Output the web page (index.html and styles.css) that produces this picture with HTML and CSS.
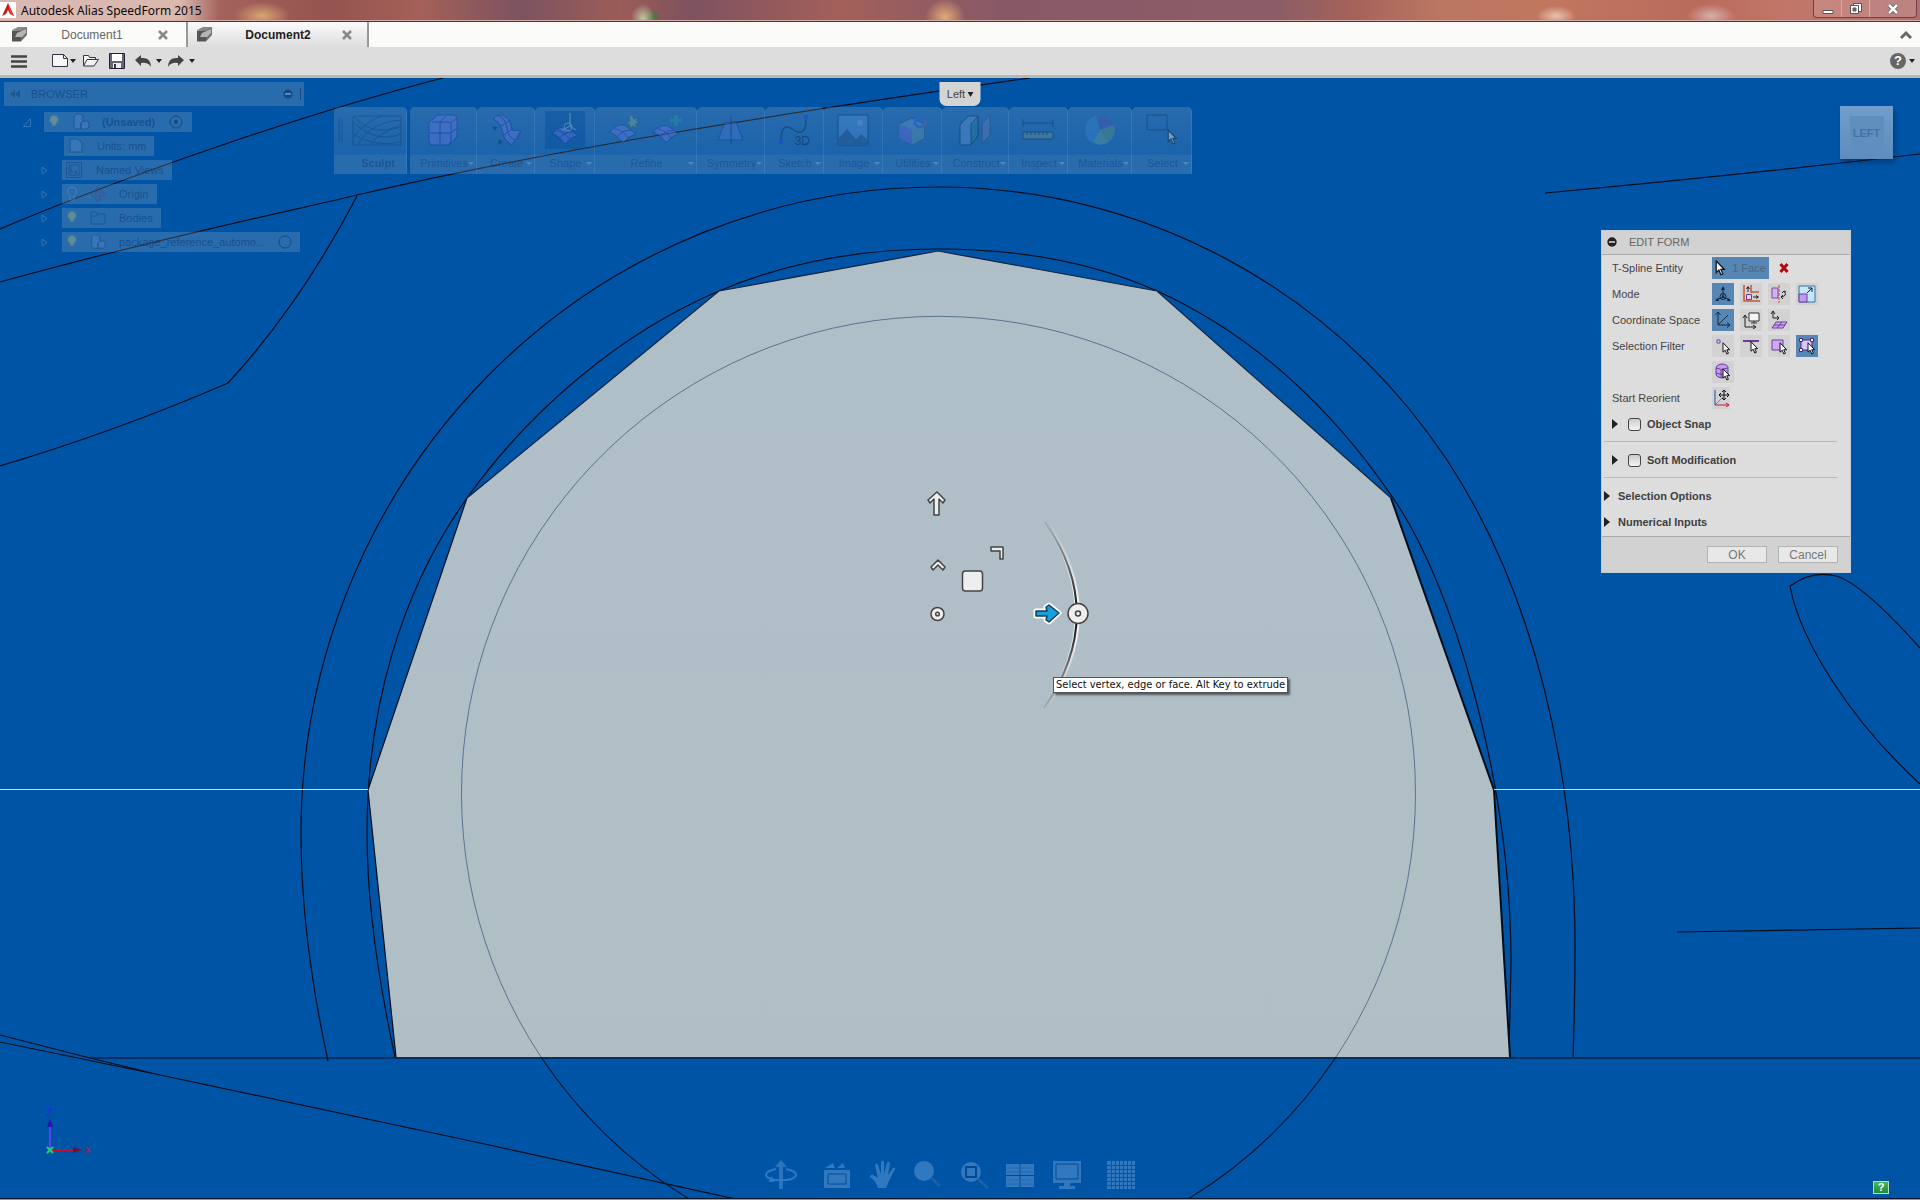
FILE: index.html
```
<!DOCTYPE html>
<html lang="en">
<head>
<meta charset="utf-8">
<title>Autodesk Alias SpeedForm 2015</title>
<link rel="stylesheet" href="styles.css">
</head>
<body>
<svg class="defs" aria-hidden="true">
  <defs>
    <symbol id="cursor" viewBox="0 0 9 13"><path d="M1 .8v9.4l2.2-2 1.6 3.8 1.6-.7-1.6-3.6h2.9z" fill="#fff" stroke="#111" stroke-width="1"/></symbol>
    <symbol id="doc" viewBox="0 0 17 17"><path d="M1 4l6-3h9l-5 4z" fill="#888"/><path d="M1 4.500h9v11H1z" fill="#555"/><path d="M10 4.500L16 1v8l-6 6.500z" fill="#707070"/><path d="M4 11l2-4 9-4v4l-4 4z" fill="#b5b5b5"/></symbol>
    <symbol id="bulb" viewBox="0 0 12 16"><path d="M6 1a4.500 4.500 0 0 0-2 8.500V12h4V9.500A4.500 4.500 0 0 0 6 1z" fill="#b4c080" stroke="#4c7890"/><path d="M4 13h4v2H4z" fill="#35607f"/></symbol>
    <symbol id="part" viewBox="0 0 18 18"><path d="M2 3l2-2h5l2 2v5l-2 2v6H4l-2-2zM9 10l2-2h4l2 2v4l-2 2H9z" fill="#4c87cb" stroke="#0d3468"/></symbol>
    <symbol id="patch" viewBox="0 0 32 26"><path d="M1 11Q12-1 20 5q5 3 10 8-8 2-14 10Q9 13 1 11z" fill="#6d7cf0" stroke="#10307a"/><path d="M7 7q10 3 16 12M9 17Q15 8 25 9" fill="none" stroke="#2030a0"/></symbol>
    <linearGradient id="fade" x1="0" y1="0" x2="0" y2="1"><stop offset="0" stop-color="#111" stop-opacity=".1"/><stop offset=".45" stop-color="#111"/><stop offset=".55" stop-color="#111"/><stop offset="1" stop-color="#111" stop-opacity=".1"/></linearGradient>
    <linearGradient id="glow" x1="0" y1="0" x2="0" y2="1"><stop offset="0" stop-color="#fff" stop-opacity="0"/><stop offset=".5" stop-color="#fff"/><stop offset="1" stop-color="#fff" stop-opacity="0"/></linearGradient>
    <linearGradient id="facefill" x1="0" y1="0" x2="0" y2="1"><stop offset="0" stop-color="#afbfc8"/><stop offset="1" stop-color="#b1bec6"/></linearGradient>
  </defs>
</svg>

<header class="titlebar">
  <svg class="app-logo" width="16" height="16" viewBox="0 0 16 16"><path fill="#fff" d="M0 0h16v16H0z"/><path d="M8 1L2 14l4-2 2-4 2 4 4 2z" fill="#c81e14"/><path d="M8 1l6 13-4-3z" fill="#ef4030"/></svg>
  <h1 class="app-title">Autodesk Alias SpeedForm 2015</h1>
  <div class="window-buttons">
    <button aria-label="Minimize"><svg width="12" height="14" viewBox="0 0 12 14"><path d="M1 8.500h10v3H1z" fill="#fff" stroke="#555"/></svg></button>
    <button aria-label="Restore"><svg width="12" height="12" viewBox="0 0 12 12"><path d="M3.500.5h8v8h-8z" fill="#fff" stroke="#555"/><path d="M.5 2.500h8v8h-8z" fill="#fff" stroke="#555"/><path d="M3 5h3v3H3z" fill="#98646a" stroke="#555"/></svg></button>
    <button class="close" aria-label="Close"><svg width="12" height="12" viewBox="0 0 12 12"><path d="M2 2l8 8M10 2l-8 8" stroke="#555" stroke-width="4"/><path d="M2 2l8 8M10 2l-8 8" stroke="#fff" stroke-width="2.500"/></svg></button>
  </div>
</header>

<nav class="tabs">
  <div class="tab"><svg width="17" height="17"><use href="#doc"/></svg><a href="#doc1">Document1</a><button aria-label="Close Document1"><svg width="10" height="10" viewBox="0 0 10 10"><path d="M1 1l8 8M9 1L1 9" stroke="#888" stroke-width="2.500"/></svg></button></div>
  <div class="tab active"><svg width="17" height="17"><use href="#doc"/></svg><a href="#doc2">Document2</a><button aria-label="Close Document2"><svg width="10" height="10" viewBox="0 0 10 10"><path d="M1 1l8 8M9 1L1 9" stroke="#888" stroke-width="2.500"/></svg></button></div>
  <button class="collapse" aria-label="Collapse"><svg width="14" height="10" viewBox="0 0 14 10"><path d="M2 8l5-5 5 5" fill="none" stroke="#666" stroke-width="3"/></svg></button>
</nav>

<div class="toolbar">
  <button class="menu" aria-label="Menu"><svg width="18" height="15" viewBox="0 0 18 15"><path d="M1 2.500h16M1 7.500h16M1 12.500h16" stroke="#444" stroke-width="2.600"/></svg></button>
  <button aria-label="New"><svg width="26" height="16" viewBox="0 0 26 16"><path d="M1.500 1.500h11l4 4v8h-15z" fill="#f4f6f8" stroke="#334"/><path d="M12.500 1.500v4h4" fill="none" stroke="#334"/><path d="M19 6h6l-3 4z" fill="#222"/></svg></button>
  <button class="open" aria-label="Open"><svg width="18" height="16" viewBox="0 0 18 16"><path d="M1.500 12V2.500h5l1 2h6v2" fill="#f2f4f6" stroke="#334"/><path d="M1.500 13L5 6.500h11.500L12 13z" fill="#f2f4f6" stroke="#334"/></svg></button>
  <button class="save" aria-label="Save"><svg width="16" height="16" viewBox="0 0 16 16"><path d="M.5.5h15v15H.5z" fill="#667" stroke="#223"/><path d="M3 1h10v7H3z" fill="#fff"/><path d="M4 10h8v5H4z" fill="#eee"/><path d="M5 11h2v4H5z" fill="#334"/></svg></button>
  <button class="undo" aria-label="Undo"><svg width="28" height="16" viewBox="0 0 28 16"><path d="M0 7l6-5v3q10-1 10 9-3-5-10-4v3z" fill="#444"/><path d="M21 6h6l-3 4z" fill="#222"/></svg></button>
  <button aria-label="Redo"><svg width="28" height="16" viewBox="0 0 28 16"><path d="M16 7l-6-5v3Q0 4 0 14q3-5 10-4v3z" fill="#444"/><path d="M21 6h6l-3 4z" fill="#222"/></svg></button>
  <button class="help" aria-label="Help"><span class="help-disc">?</span><svg width="6" height="5" viewBox="0 0 6 5"><path d="M0 0h6L3 4z" fill="#222"/></svg></button>
</div>

<main class="viewport">
  <svg class="scene" viewBox="0 78 1920 1120" preserveAspectRatio="xMidYMid slice">
    <path d="M395 1057C374 960 367 890 367 833C367 710 400 592 467 498C530 410 620 333 719 291C790 261 865 249 938 249C1015 249 1090 261 1157 291C1250 333 1330 405 1393 498C1452 582 1511 780 1511 962L1509 1057" fill="none" stroke="#060c1a" stroke-width="1.200"/>
    <path d="M938 251L1157 291 1391 498 1494 790 1510 1057H396L368 790 467 498 719 291z" fill="url(#facefill)"/>
    <g fill="none" stroke="#060c1a" stroke-width="1.200">
      <path d="M467 498L719 291 938 251 1157 291 1391 498" stroke="#13213c"/>
      <path d="M467 498L368 790 396 1057"/>
      <path d="M1391 498L1494 790 1510 1057" stroke-width="2"/>
      <path d="M328 1061C306 960 301 890 301 833A637 646 0 0 1 938 187C1140 187 1330 285 1447 460C1536 595 1575 775 1575 945Q1575 1005 1573 1057"/>
      <path d="M90 1058H1920"/>
      <path d="M0 229C120 178 300 115 443 78"/>
      <path d="M0 282C170 235 300 209 357 195C550 150 770 115 1030 78"/>
      <path d="M357 196Q300 305 228 383Q120 430 0 466"/>
      <path d="M1545 193Q1740 175 1920 154"/>
      <path d="M1920 784C1850 720 1800 640 1790 586Q1812 570 1836 576Q1862 583 1920 648"/>
      <path d="M1677 932L1920 928"/>
      <path d="M0 1035L86 1057 160 1075M0 1042L160 1075 480 1143 740 1200"/>
    </g>
    <path d="M541 1057A477 477 0 1 1 1336 1057" fill="none" stroke="#5b7390"/>
    <path d="M541 1057A477 477 0 0 0 694 1202M1336 1057A477 477 0 0 1 1183 1202" fill="none" stroke="#061630" stroke-width="1.200"/>
    <path d="M0 789.500H368M1494 789.500H1920" stroke="#d3dbe6"/>

    <g fill="none"><path d="M1046 522Q1109 614 1045 708" stroke="url(#glow)" stroke-width="5"/><path d="M1045 522Q1109 614 1044 708" stroke="url(#fade)" stroke-width="2"/></g>
    <g fill="#eee" stroke="#444" stroke-width="1.500" stroke-linejoin="round">
      <path d="M937 492l8 8-2 3-4-4v16h-5v-16l-4 4-2-3z"/>
      <path d="M938 560l7 7-2 3-5-5-5 5-2-3z"/>
      <path d="M991 547h12v12h-3v-8h-9z"/>
      <rect x="962.500" y="571" width="20" height="20" rx="3"/>
      <circle cx="937.500" cy="614" r="6.500"/><circle cx="937.500" cy="614" r="1.800"/>
      <circle cx="1078" cy="613.500" r="10"/><circle cx="1078" cy="613.500" r="2.500"/>
    </g>
    <path d="M1036 611h11l-1-4 3-2 10 8-10 9-3-2 1-4h-11z" fill="#fff" stroke="#fff" stroke-width="5" stroke-linejoin="round"/>
    <path d="M1036 611h11l-1-4 3-2 10 8-10 9-3-2 1-4h-11z" fill="#18a0dc" stroke="#123f58" stroke-width="1.500" stroke-linejoin="round"/>
    <g class="axis"><path d="M50 1150v-31" stroke="#5540ff" stroke-width="2"/><path d="M50 1118l3 9h-6z" fill="#2018b0"/><path d="M51 1150h25" stroke="#c01030" stroke-width="2"/><path d="M82 1150l-9-3v6z" fill="#701030"/><path d="M47 1147l6 6m0-6l-6 6" stroke="#28d070" stroke-width="2"/><text x="46" y="1116" fill="#2424e8">Z</text><text x="85" y="1153" fill="#b01848">x</text></g>
  </svg>

  <section class="browser" aria-label="Browser">
    <h2><svg width="10" height="8" viewBox="0 0 10 8"><path d="M5 0v8L0 4zM10 0v8L5 4z" fill="#0d3468"/></svg><span>BROWSER</span><svg class="min" width="20" height="12" viewBox="0 0 20 12"><circle cx="5" cy="6" r="4.500" fill="#0d3468"/><path d="M2 6h6" stroke="#6b9bd0" stroke-width="2"/><path d="M17.500 0v12" stroke="#0d3468"/></svg></h2>
    <ul>
      <li class="root"><svg class="twist" width="8" height="9" viewBox="0 0 8 9"><path d="M7.500.5v8h-7z" fill="none" stroke="#85a9d2"/></svg><div class="node n1"><svg width="12" height="16"><use href="#bulb"/></svg><svg width="18" height="18"><use href="#part"/></svg><b>(Unsaved)</b><svg class="radio" width="14" height="14" viewBox="0 0 14 14"><circle cx="7" cy="7" r="6" fill="none" stroke="#0d3468"/><circle cx="7" cy="7" r="2" fill="#0d3468"/></svg></div></li>
      <li><div class="node n2"><svg width="16" height="17" viewBox="0 0 16 17"><path d="M2 1h8l4 4v9H2z" fill="#4c87cb" stroke="#0d3468"/><path d="M0 16h15" stroke="#5a8c70"/></svg><span>Units: mm</span></div></li>
      <li><svg class="twist" width="7" height="9" viewBox="0 0 7 9"><path d="M1 1v7l5-3.500z" fill="none" stroke="#85a9d2"/></svg><div class="node n3"><svg width="16" height="16" viewBox="0 0 16 16"><path d="M.5.5h15v15H.5zM3 3h10v10H3zM5 4v6h6M9 8l2 2-2 2" fill="none" stroke="#0d3468"/></svg><span>Named Views</span></div></li>
      <li><svg class="twist" width="7" height="9" viewBox="0 0 7 9"><path d="M1 1v7l5-3.500z" fill="none" stroke="#85a9d2"/></svg><div class="node n4"><svg width="12" height="16" viewBox="0 0 12 16"><path d="M6 1a4.500 4.500 0 0 0-2 8.500V14h4V9.500A4.500 4.500 0 0 0 6 1z" fill="none" stroke="#7fa6d6"/></svg><svg width="14" height="14" viewBox="0 0 14 14"><path d="M7 1l6 6-6 6-6-6zM5 5h4v4H5z" fill="none" stroke="#5a3a6a"/></svg><span>Origin</span></div></li>
      <li><svg class="twist" width="7" height="9" viewBox="0 0 7 9"><path d="M1 1v7l5-3.500z" fill="none" stroke="#85a9d2"/></svg><div class="node n4 n5"><svg width="12" height="16"><use href="#bulb"/></svg><svg width="16" height="14" viewBox="0 0 16 14"><path d="M1 1h5l1 2h8v10H1zM1 5h6l1-2" fill="none" stroke="#0d3468"/></svg><span>Bodies</span></div></li>
      <li><svg class="twist" width="7" height="9" viewBox="0 0 7 9"><path d="M1 1v7l5-3.500z" fill="none" stroke="#85a9d2"/></svg><div class="node n4 n6"><svg width="12" height="16"><use href="#bulb"/></svg><svg width="18" height="18"><use href="#part"/></svg><span>package_reference_automo...</span><svg class="radio" width="14" height="14" viewBox="0 0 14 14"><circle cx="7" cy="7" r="6" fill="none" stroke="#0d3468"/></svg></div></li>
    </ul>
  </section>

  <div class="ribbon">
    <button class="group sculpt"><span class="art"><svg width="64" height="32" viewBox="0 0 64 32"><path d="M1 4v24M4 4v24M15 2h48v29H15zM15 8q24 22 48 12M15 20q22 14 48 8M15 2q24 24 48 8M20 31Q32 8 63 6M15 24Q28 6 45 2M32 31Q44 16 63 13" fill="none" stroke="#0d3468"/></svg></span><span class="label"><b>Sculpt</b></span></button>
    <button class="group g-primitives"><span class="art"><svg width="32" height="32" viewBox="0 0 32 32"><path d="M2 10q0-3 3-4l4-4q2-1 4-1h13q4 0 4 4v16q0 2-2 4l-4 4q-2 2-4 2H6q-4 0-4-4z" fill="#6d7cf0" stroke="#1b2c90"/><path d="M5 8h16q3 0 3 3v15q0 3-3 5M24 9l6-5M13 8v23M2 19h22l6-5M13 8l6-6" fill="none" stroke="#1b2c90"/></svg></span><span class="label">Primitives</span></button>
    <button class="group g-create"><span class="art"><svg width="32" height="32" viewBox="0 0 32 32"><path d="M3 5Q8-1 14 2q6 2 7 10l1 4 9 1-9 14q-6-3-8-8-2-8-4-12Q7 6 3 5z" fill="#6d7cf0" stroke="#10307a"/><path d="M8 2q8 2 9 12t8 12M11 12l9-6M14 21l8-6" fill="none" stroke="#10307a"/><path d="M2 12l5 1-2 4zM8 31l1-6 4 3z" fill="#062048"/></svg></span><span class="label">Create</span></button>
    <button class="group g-shape"><span class="art on"><svg width="28" height="34" viewBox="0 0 28 34"><use href="#patch" y="11" width="28" height="23"/><path d="M19 0v13M19 13l-8 4M19 13l6 4" stroke="#d8e8f8" fill="none"/><circle cx="17" cy="14" r="4" fill="none" stroke="#c0d0d8"/></svg></span><span class="label">Shape</span></button>
    <button class="group g-refine"><span class="art"><svg width="32" height="32" viewBox="0 0 32 32"><use href="#patch" y="8" width="30" height="24"/><path d="M24 1l2 4 4-1-1 3 3 1-4 2 1 4-4-2-3 3v-4l-4-2 4-2-1-4z" fill="#88b09a" stroke="#3a6a4a"/></svg><svg width="32" height="32" viewBox="0 0 32 32"><use href="#patch" y="8" width="28" height="24"/><path d="M24 1v11M18 6.500h12" stroke="#20a090" stroke-width="4"/></svg></span><span class="label">Refine</span></button>
    <button class="group g-symmetry"><span class="art"><svg width="30" height="30" viewBox="0 0 30 30"><path d="M9 7h11l7 18H2z" fill="#4c78d8" stroke="#10307a"/><path d="M15 0v29" stroke="#062048"/></svg></span><span class="label">Symmetry</span></button>
    <button class="group g-sketch"><span class="art"><svg width="32" height="32" viewBox="0 0 32 32"><path d="M3 28Q3 12 9 13c6 0 7 7 14 5q6-2 5-15" fill="none" stroke="#062048" stroke-width="1.500"/><path d="M1 26h4v4H1zM26 1h4v4h-4z" fill="#1238f0"/></svg><span class="three-d">3D</span></span><span class="label">Sketch</span></button>
    <button class="group g-image"><span class="art"><svg width="32" height="32" viewBox="0 0 32 32"><path d="M1 1h30v30H1z" fill="#5090da" stroke="#062048"/><circle cx="23" cy="9" r="3" fill="#88b0e8"/><path d="M1 25l9-10 9 10 5-5 7 6v5H1z" fill="#284e80"/></svg></span><span class="label">Image</span></button>
    <button class="group g-utilities"><span class="art"><svg width="30" height="32" viewBox="0 0 30 32"><path d="M2 10l13-6 12 6v14l-12 7-13-7z" fill="#6a98cc" stroke="#24466e"/><path d="M15 16v15L2 24V10z" fill="#6a68e0"/><path d="M15 16l12-6v14l-12 7z" fill="#6a98a8"/><circle cx="23" cy="8" r="5" fill="none" stroke="#2066e8" stroke-width="3"/><path d="M24 13q5-1 5-7" stroke="#a05878" fill="none" stroke-width="2"/></svg></span><span class="label">Utilities</span></button>
    <button class="group g-construct"><span class="art"><svg width="32" height="32" viewBox="0 0 32 32"><path d="M1 11l8-9h10v20l-7 9H1z" fill="#6298d0" stroke="#062048"/><path d="M12 10l7-8v20l-7 9z" fill="#208098" stroke="#062048"/><path d="M23 10l8-9v20l-8 9z" fill="#7078b0" stroke="#24466e"/></svg></span><span class="label">Construct</span></button>
    <button class="group g-inspect"><span class="art"><svg width="32" height="30" viewBox="0 0 32 30"><path d="M1 4v8M31 4v8M1 8h30" stroke="#062048"/><path d="M1 17h30v7H1z" fill="#709880" stroke="#062048"/><path d="M5 17v3m4-3v3m4-3v3m4-3v3m4-3v3m4-3v3" stroke="#062048"/></svg></span><span class="label">Inspect</span></button>
    <button class="group g-materials"><span class="art"><svg width="32" height="32" viewBox="0 0 32 32"><circle cx="16" cy="16" r="15" fill="#3a84d8"/><path d="M16 16L12 2q12-4 18 9z" fill="#4a50a8"/><path d="M16 16l14-5q3 10-6 17z" fill="#609878"/><path d="M16 16l8 12q-8 5-14 0z" fill="#68a890"/></svg></span><span class="label">Materials</span></button>
    <button class="group g-select"><span class="art"><svg width="32" height="32" viewBox="0 0 32 32"><path d="M1 1h20v15H1z" fill="none" stroke="#062048"/><use href="#cursor" x="21" y="15" width="11" height="16"/></svg></span><span class="label">Select</span></button>
  </div>

  <button class="view-name">Left<svg width="6" height="5" viewBox="0 0 6 5"><path d="M0 0h6L3 5z" fill="#222"/></svg></button>
  <button class="cube"><span>LEFT</span></button>

  <form class="panel">
    <h2><svg width="10" height="10" viewBox="0 0 10 10"><circle cx="5" cy="5" r="4.700" fill="#222"/><path d="M2 5h6" stroke="#ddd" stroke-width="1.500"/></svg>EDIT FORM</h2>
    <div class="rows">
      <div class="row"><span class="name">T-Spline Entity</span><div class="tools"><button type="button" class="entity"><svg width="11" height="16"><use href="#cursor"/></svg>1 Face</button><button type="button" class="clear" aria-label="Clear"><svg width="10" height="10" viewBox="0 0 10 10"><path d="M1.500 1l7 8M8.500 1l-7 8" stroke="#b00c10" stroke-width="3"/></svg></button></div></div>
      <div class="row"><span class="name">Mode</span><div class="tools">
        <button type="button" class="on" aria-label="Multi"><svg width="18" height="18" viewBox="0 0 18 18"><path d="M9 3v8M9 12l-7 3M9 12l7 3" stroke="#10253c" fill="none"/><circle cx="9" cy="11.500" r="3" fill="none" stroke="#10253c"/><path d="M9 1l2 4H7zM1 16l3-3 1 3zM17 16l-3-3-1 3zM8 10.500h2v2H8z" fill="#10253c"/></svg></button>
        <button type="button" aria-label="Translate"><svg width="18" height="18" viewBox="0 0 18 18"><path d="M2 0v16h16M9 0v7h8" stroke="#c8543c" stroke-width="1.500" fill="none"/><path d="M4.500 9.500h5v5h-5z" fill="#e5d4f8" stroke="#6b3aa0"/><path d="M6 7V2M4.500 4L6 1.500 7.500 4M11 12h5M14 10.500l2.500 1.500-2.500 1.500" stroke="#222" fill="none"/></svg></button>
        <button type="button" aria-label="Rotate"><svg width="18" height="18" viewBox="0 0 18 18"><path d="M2 3h6v10H2z" fill="#cfb3ee" stroke="#7848a8"/><path d="M9 0v18" stroke="#e03838" stroke-dasharray="3 1"/><path d="M14 6q4 5-3 6M13 10l-2 2 2 2M12 8l2-2 2 1" stroke="#222" fill="none"/></svg></button>
        <button type="button" aria-label="Scale"><svg width="18" height="18" viewBox="0 0 18 18"><path d="M1 1h16v16H1z" fill="#c4e8fb" stroke="#38749c"/><path d="M1 9h8v8H1z" fill="#bf9cec" stroke="#6b3aa0"/><path d="M9 8l5-5M10 3h4v4" stroke="#122" fill="none"/></svg></button>
      </div></div>
      <div class="row"><span class="name">Coordinate Space</span><div class="tools">
        <button type="button" class="on" aria-label="World"><svg width="18" height="18" viewBox="0 0 18 18"><path d="M4 1v13h12M4 14L14 4M1.500 4L4 1l2.500 3M13 11.500l3 2.500-3 2.500" stroke="#122a44" fill="none"/></svg></button>
        <button type="button" aria-label="View"><svg width="18" height="18" viewBox="0 0 18 18"><path d="M3 5v11h10M1 7l2-3 2 3M11 14l3 2-3 2" stroke="#222" fill="none"/><path d="M7 2h10v8H7z" fill="#f2f4f8" stroke="#333"/><path d="M9 12h6M12 10v2" stroke="#333"/></svg></button>
        <button type="button" aria-label="Local"><svg width="18" height="18" viewBox="0 0 18 18"><path d="M3 0v7h6M1 3l2-3 2 3M7 5l2 2-2 2" stroke="#222" fill="none"/><path d="M6 11h11l-4 6H2zM4 14h11M12 11l-5 6" fill="#cba9f0" stroke="#6b3aa0"/></svg></button>
      </div></div>
      <div class="row"><span class="name">Selection Filter</span><div class="tools">
        <button type="button" aria-label="Vertex"><svg width="18" height="18" viewBox="0 0 18 18"><path d="M3 3h3v3H3z" fill="#eee" stroke="#6b3aa0"/><use href="#cursor" x="8" y="5" width="9" height="13"/></svg></button>
        <button type="button" aria-label="Edge"><svg width="18" height="18" viewBox="0 0 18 18"><path d="M1 4h16" stroke="#6b3aa0" stroke-width="2"/><use href="#cursor" x="8" y="4" width="9" height="13"/></svg></button>
        <button type="button" aria-label="Face"><svg width="18" height="18" viewBox="0 0 18 18"><path d="M2 3h11v10H2z" fill="#cfa9f2" stroke="#6b3aa0"/><use href="#cursor" x="9" y="5" width="9" height="13"/></svg></button>
        <button type="button" class="on" aria-label="All"><svg width="18" height="18" viewBox="0 0 18 18"><path d="M3 3h11v10H3z" fill="#dcc4f5" stroke="#4a2a80"/><path d="M1.500 1.500h3v3h-3zM12.500 1.500h3v3h-3zM1.500 11.500h3v3h-3z" fill="#fff" stroke="#4a2a80"/><use href="#cursor" x="9" y="5" width="9" height="13"/></svg></button>
        <button type="button" aria-label="Body"><svg width="18" height="18" viewBox="0 0 18 18"><path d="M2 5q0-3 5-4 6 0 7 3v8q-3 3-7 3-5-1-5-4z" fill="#c79cf0" stroke="#6b3aa0"/><path d="M2 5q5 3 12 0M7 7v8M2 10q5 3 11 0" fill="none" stroke="#6b3aa0"/><use href="#cursor" x="8" y="5" width="9" height="13"/></svg></button>
      </div></div>
      <div class="row"><span class="name">Start Reorient</span><div class="tools"><button type="button" class="reorient" aria-label="Start Reorient"><svg width="18" height="18" viewBox="0 0 18 18"><path d="M3 16L11 8" stroke="#40b040"/><path d="M3 1v15" stroke="#1c50a0"/><path d="M3 16h14M14 14l3 2-3 2" stroke="#c81838" fill="none"/><path d="M12 1v10M7 6h10M10 3l2-2 2 2M10 9l2 2 2-2M9 4L7 6l2 2M15 4l2 2-2 2" stroke="#111" fill="none"/></svg></button></div></div>
      <div class="row fold"><i></i><input type="checkbox" id="snap"><label for="snap">Object Snap</label></div>
      <hr>
      <div class="row fold"><i></i><input type="checkbox" id="soft"><label for="soft">Soft Modification</label></div>
      <hr>
      <div class="row fold outer"><i></i><b>Selection Options</b></div>
      <div class="row fold outer"><i></i><b>Numerical Inputs</b></div>
    </div>
    <footer><button type="button">OK</button><button type="button">Cancel</button></footer>
  </form>

  <div class="tooltip" role="tooltip">Select vertex, edge or face. Alt Key to extrude</div>

  <div class="navbar">
    <button aria-label="Orbit"><svg width="32" height="32" viewBox="0 0 32 32"><path d="M16 1l6 7h-4v22h-4V8h-4z" fill="#5a9adc"/><path d="M11 10Q1 12 1 16c0 7 30 7 30 0q0-4-10-6M6 18l2 4-4 0" fill="none" stroke="#6aa6e0" stroke-width="2"/></svg></button>
    <button aria-label="Look at"><svg width="28" height="30" viewBox="0 0 28 30"><path d="M1 10h26v18H1zM2 8l8-5 2 5zM14 8l6-5 2 5z" fill="#6aa6e0"/><path d="M5 14h18v10H5z" fill="none" stroke="#103a70"/></svg></button>
    <button aria-label="Pan"><svg width="28" height="30" viewBox="0 0 28 30"><path d="M9 28Q7 21 1 17q0-3 3-2l5 3L6 5q2-3 3 0l3 9V2q2-3 3 0v12l3-11q2-2 3 0l-2 12 5-7q3-1 2 1l-6 12-3 7z" fill="#6aa6e0"/></svg></button>
    <button aria-label="Zoom"><svg width="30" height="30" viewBox="0 0 30 30"><circle cx="12" cy="11" r="10" fill="#6aa6e0"/><path d="M19 18l9 8" stroke="#3f6ea8" stroke-width="3"/></svg></button>
    <button aria-label="Fit"><svg width="30" height="30" viewBox="0 0 30 30"><circle cx="11" cy="12" r="10" fill="#6aa6e0"/><path d="M6 7h10v10H6z" fill="none" stroke="#103a70" stroke-width="2"/><path d="M18 19l10 9" stroke="#3f6ea8" stroke-width="3"/></svg></button>
    <button aria-label="Viewports"><svg width="28" height="26" viewBox="0 0 28 26"><path d="M0 2h28v23H0z" fill="#6aa6e0"/><path d="M14 2v23M0 13.500h28" stroke="#103a70"/><path d="M1 6h26M1 10h26M1 18h26M1 22h26" stroke="#4680bc"/></svg></button>
    <button aria-label="Display"><svg width="30" height="30" viewBox="0 0 30 30"><path d="M1 1h28v22H1zM12 23h6v3h5v3H7v-3h5z" fill="#6aa6e0"/><path d="M4 4h22v15H4z" fill="none" stroke="#103a70"/></svg></button>
    <button aria-label="Grid"><svg width="28" height="28" viewBox="0 0 28 28"><path d="M0 0h28v28H0z" fill="#6aa6e0"/><path d="M4.500 0v28M8.500 0v28M12.500 0v28M16.500 0v28M20.500 0v28M24.500 0v28M0 4.500h28M0 8.500h28M0 12.500h28M0 16.500h28M0 20.500h28M0 24.500h28" stroke="#1d559a"/></svg></button>
  </div>
  <button class="tip" aria-label="Tips">?</button>
</main>
<div class="edge"></div>
</body>
</html>
```
FILE: styles.css
```
* { box-sizing: border-box; }
body { margin: 0; height: 100vh; display: flex; flex-direction: column; overflow: hidden; font: 11px/16px "Liberation Sans", Arial, sans-serif; color: #444; background: #0054a6; }
button { font: inherit; color: inherit; border: 0; padding: 0; margin: 0; background: none; display: flex; align-items: center; justify-content: center; }
h1, h2, ul { margin: 0; padding: 0; font-size: inherit; font-weight: normal; list-style: none; }
a { color: inherit; text-decoration: none; }
svg { display: block; flex: none; }
.defs { position: absolute; width: 0; height: 0; }

.titlebar { height: 22px; flex: none; display: flex; align-items: center; border-bottom: 1px solid #5b3038; box-shadow: inset 0 -1px #d5a9a2;
  background:
    radial-gradient(ellipse 28px 14px at 262px 16px, #d8a673, transparent),
    radial-gradient(ellipse 12px 14px at 643px 18px, #b9c79c, transparent),
    radial-gradient(ellipse 8px 10px at 653px 18px, #3f7a34, transparent),
    radial-gradient(ellipse 20px 18px at 945px 17px, #e2aa74, transparent),
    radial-gradient(ellipse 20px 10px at 1556px 16px, #e8c2b0, transparent),
    radial-gradient(ellipse 24px 12px at 1711px 16px, #d5b0a8, transparent),
    linear-gradient(90deg, #d9b9b3 0, #dab8ae 180px, #a3625c 220px, #94544f 330px, #a46059 420px, #7c5360 520px, #9c5c58 620px, #7e525f 690px, #a3605a 840px, #875967 1000px, #8d5d67 1280px, #a76359 1360px, #bb7762 1440px, #c1775f 1540px, #b96b5c 1700px, #c2776a 1790px, #b06f6e 100%); }
.app-logo { margin-top: -2px; }
.app-title { margin-left: 5px; flex: 1; font: 12px/20px "Noto Sans", "Open Sans", sans-serif; color: #0e0a0a; }
.window-buttons { display: flex; align-self: flex-start; margin-right: 3px; border: 1px solid #6c4046; border-top: 0; border-radius: 0 0 4px 4px; background: #ffffff22; }
.window-buttons button { width: 28px; height: 17px; border-right: 1px solid #dca9a4; }
.window-buttons .close { width: 46px; border: 0; }

.tabs { height: 25px; flex: none; display: flex; background: #fbfbfa; }
.tab { width: 188px; display: flex; align-items: center; padding-left: 11px; border-right: 2px solid #999; font-size: 12px; color: #666; }
.tab a { flex: 1; text-align: center; margin-left: 16px; }
.tab button { width: 46px; padding-right: 0; }
.tab.active { width: 181px; padding-left: 8px; background: linear-gradient(#fbfbfb, #ddd); color: #222; font-weight: bold; }
.tab.active button { width: 40px; }
.collapse { margin: 0 7px 0 auto; }
.toolbar { height: 31px; flex: none; display: flex; align-items: center; padding: 0 5px 0 10px; background: #ddd; border-bottom: 3px solid #b8b8b5; }
.menu { margin-right: 23px; }
.open { margin-left: 5px; }
.save { margin: 0 10px 0 9px; }
.undo { margin-right: 5px; }
.help { margin-left: auto; gap: 3px; }
.help-disc { width: 16px; height: 16px; border-radius: 8px; background: #666; color: #fff; font-weight: bold; font-size: 13px; }

.viewport { position: relative; flex: 1; min-height: 0; overflow: hidden; background: #0054a6; }
.scene { position: absolute; inset: 0; width: 100%; height: 100%; }
.axis { font: 11px "Liberation Sans", Arial, sans-serif; }
.edge { height: 2px; flex: none; background: #8a97a3; border-top: 1px solid #061428; }

.browser { position: absolute; left: 4px; top: 4px; width: 300px; color: rgba(8, 50, 110, .5); }
.browser svg { opacity: .4; }
.browser .min, .browser .radio { opacity: .65; }
.browser h2 { height: 24px; display: flex; align-items: center; padding: 0 1px 0 6px; background: rgba(205, 205, 205, .2); }
.browser h2 span { flex: 1; margin-left: 11px; }
.browser ul { padding-top: 6px; display: grid; row-gap: 4px; }
.browser li { position: relative; height: 20px; padding-left: 58px; }
.browser .root { padding-left: 40px; }
.twist { position: absolute; left: 37px; top: 6px; }
.root .twist { left: 19px; }
.node { height: 20px; display: flex; align-items: center; padding: 0 4px; background: rgba(205, 205, 205, .2); }
.n1 { width: 148px; gap: 12px; }
.n1 .radio { margin-left: 2px; }
.n2 { margin-left: 2px; width: 90px; gap: 13px; }
.n3 { width: 110px; gap: 14px; }
.n4 { width: 95px; gap: 10px; }
.n4 > svg:nth-child(2) { width: 18px; height: 18px; padding: 1px; margin: 0 2px 0 1px; }
.n5 { width: 99px; }
.n6 { width: 238px; }
.n6 .radio { margin-left: auto; margin-right: 4px; }

.ribbon { position: absolute; left: 334px; top: 29px; height: 67px; display: flex; color: rgba(8, 50, 110, .4); }
.group { display: flex; flex-direction: column; border-radius: 5px 5px 0 0; background: linear-gradient(rgba(205, 205, 205, .2), rgba(205, 205, 205, .13) 70%, rgba(205, 205, 205, .2) 72%); border-right: 1px solid rgba(190, 215, 240, .12); }
.art { flex: 1; display: flex; gap: 12px; align-items: center; position: relative; }
.art svg { opacity: .36; }
.art.on { flex: none; width: 40px; height: 38px; margin: 4px 0; justify-content: center; background: rgba(0, 75, 155, .4); }
.three-d { position: absolute; right: 0; bottom: 4px; font-size: 12px; line-height: 16px; color: rgba(6, 32, 72, .5); }
.label { width: 100%; height: 21px; line-height: 20px; padding-left: 2px; position: relative; }
.group:not(.sculpt) .label::after { content: ""; position: absolute; right: 2px; top: 9px; border: 3px solid transparent; border-top-color: rgba(170, 205, 240, .3); }
.sculpt { width: 73px; margin-right: 3px; }
.sculpt .label { padding-left: 16px; }
.g-primitives { width: 67px; }
.g-create { width: 58px; }
.g-shape { width: 60px; }
.g-refine { width: 102px; }
.g-symmetry { width: 68px; }
.g-sketch { width: 59px; }
.g-image { width: 59px; }
.g-utilities { width: 59px; }
.g-construct { width: 67px; }
.g-inspect { width: 59px; }
.g-materials { width: 64px; }
.g-select { width: 60px; }

.view-name { position: absolute; left: 50%; top: 4px; transform: translateX(-50%); width: 41px; height: 24px; gap: 2px; border-radius: 0 0 7px 7px; background: #d4d4d2; color: #444; }
.cube { position: absolute; right: 27px; top: 28px; width: 53px; height: 53px; background: linear-gradient(#719ecb, #5c8dbd); box-shadow: 2px 4px 5px rgba(0, 30, 70, .4); }
.cube span { width: 34px; height: 34px; line-height: 34px; background: #5e8fbf; color: #44719f; font-weight: bold; }

.panel { position: absolute; right: 69px; top: 152px; width: 250px; background: #ddd; border: 1px solid #c3ced8; }
.panel h2 { height: 24px; display: flex; align-items: center; gap: 12px; padding: 0 0 1px 5px; background: #d2d2d2; border-bottom: 1px solid #aaa; color: #666; }
.rows { padding: 0 13px 1px 2px; }
.row { min-height: 26px; display: grid; grid-template-columns: 100px 1fr; align-items: start; line-height: 26px; padding-left: 8px; }
.tools { display: flex; flex-wrap: wrap; gap: 4px 6px; padding: 2px 0; }
.tools button { width: 22px; height: 22px; background: #d2d2d2; }
.tools .on, .tools .entity { background: #5586b4; }
.tools .entity { width: 57px; gap: 6px; color: #4d6680; }
.tools .clear { margin-left: -2px; background: none; }
.tools .reorient { width: 18px; }
.fold { display: flex; align-items: center; color: #3f3f3f; font-weight: bold; }
.fold i { width: 0; border: 5px solid transparent; border-left: 6px solid #222; border-right: 0; margin-right: 10px; }
.fold input { appearance: none; width: 13px; height: 13px; margin: 0 6px 0 0; border: 1px solid #444; border-radius: 3px; background: linear-gradient(#ccc, #f5f5f5); }
.fold.outer { padding-left: 0; }
.fold.outer i { margin-right: 8px; }
.rows hr { margin: 4px 0 5px; border: 0; border-top: 1px solid #b8b8b8; }
.panel footer { height: 36px; display: flex; align-items: center; justify-content: flex-end; gap: 11px; padding-right: 12px; background: #d2d2d2; border-top: 1px solid #aaa; }
.panel footer button { width: 60px; height: 17px; border: 1px solid #b2b2b2; background: #e8e8e8; font-size: 12px; color: #777; }

.tooltip { position: absolute; left: 1053px; top: 599px; height: 16px; padding: 0 2px; border: 1px solid #555; background: #fff; color: #111; font: 11px/14px "DejaVu Sans Condensed", "DejaVu Sans", sans-serif; font-stretch: condensed; white-space: nowrap; box-shadow: 2px 2px 2px rgba(0, 0, 0, .55); }
.navbar { position: absolute; left: 751px; bottom: 5px; display: grid; grid-template-columns: 60px 52px 40px 48px 48px 42px 52px 56px; height: 36px; }
.navbar svg { opacity: .46; }
.tip { position: absolute; right: 31px; bottom: 4px; width: 16px; height: 13px; line-height: 11px; background: linear-gradient(#4fb45a, #1f8a3a); border: 1px solid #b5dfba; color: #fff; font-weight: bold; }
```
